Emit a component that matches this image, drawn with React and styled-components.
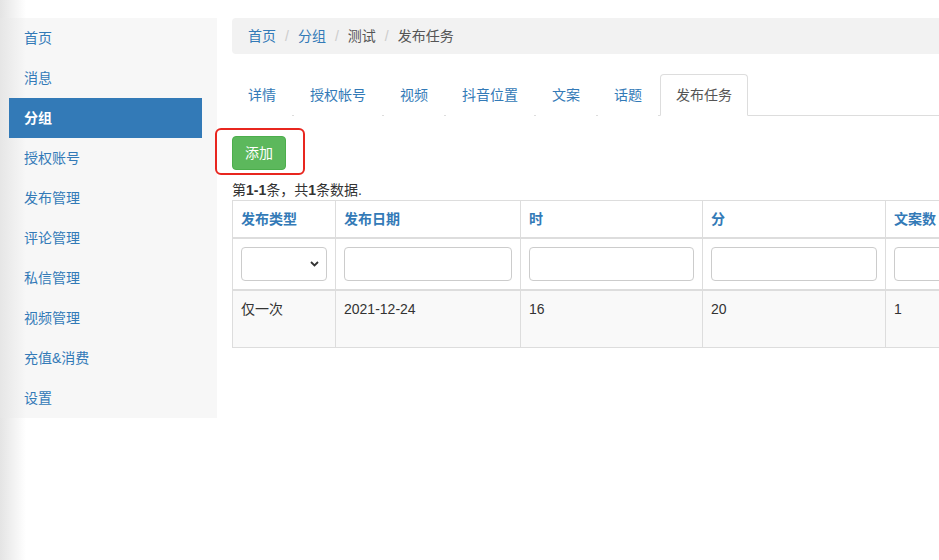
import React from 'react';
import styled, { createGlobalStyle } from 'styled-components';

const GlobalStyle = createGlobalStyle`
  html, body {
    margin: 0;
    padding: 0;
    overflow: hidden;
  }
  body {
    width: 939px;
    height: 560px;
    background: linear-gradient(to right, #e4e4e4 0, #ffffff 26px);
    font-family: "Liberation Sans", "Noto Sans CJK SC", sans-serif;
    font-size: 14px;
    line-height: 20px;
    color: #333;
  }
`;

const Page = styled.div`
  display: flex;
  align-items: flex-start;
  gap: 15px;
  padding-top: 18px;
`;

const Sidebar = styled.ul`
  flex: 0 0 auto;
  width: 193px;
  margin: 0;
  padding: 0 15px 0 9px;
  list-style: none;
  background: linear-gradient(to right, #e6e6e6 0, #f7f7f7 26px);
`;

const SideItem = styled.li`
  height: 40px;
  display: flex;
  align-items: center;
  padding-left: 15px;
  color: ${({ $active }) => ($active ? '#fff' : '#337ab7')};
  background: ${({ $active }) => ($active ? '#337ab7' : 'transparent')};
  font-weight: ${({ $active }) => ($active ? 'bold' : 'normal')};
`;

const Main = styled.div`
  flex: 0 0 auto;
  width: 760px;
`;

const Breadcrumb = styled.ol`
  display: flex;
  margin: 0 0 20px;
  padding: 8px 15px 8px 16px;
  list-style: none;
  background: #f2f2f2;
  border-radius: 4px;
`;

const Crumb = styled.li`
  color: ${({ $link }) => ($link ? '#337ab7' : '#555')};

  &:not(:first-child)::before {
    content: '/';
    padding: 0 9px;
    color: #ccc;
  }
`;

const Tabs = styled.ul`
  display: flex;
  margin: 0;
  padding: 0;
  list-style: none;
  border-bottom: 1px solid #ddd;
`;

const Tab = styled.li`
  margin: 0 2px -1px 0;
  padding: 10px 15px;
  border: 1px solid ${({ $active }) => ($active ? '#ddd' : 'transparent')};
  border-bottom-color: ${({ $active }) => ($active ? '#fff' : 'transparent')};
  border-radius: 4px 4px 0 0;
  background: #fff;
  color: ${({ $active }) => ($active ? '#555' : '#337ab7')};
`;

const Toolbar = styled.div`
  padding-top: 20px;
`;

const Marked = styled.div`
  position: relative;
  display: inline-block;
`;

const Annotation = styled.span`
  position: absolute;
  left: -17px;
  top: -8px;
  right: -19px;
  bottom: -5px;
  border: 2px solid #e8261f;
  border-radius: 6px;
  pointer-events: none;
`;

const AddButton = styled.button`
  display: block;
  padding: 6px 12px;
  border: 1px solid #4cae4c;
  border-radius: 4px;
  background: #5cb85c;
  color: #fff;
  font: inherit;
`;

const Summary = styled.div`
  margin-top: 10px;
  color: #333;

  b {
    font-weight: bold;
  }
`;

const Table = styled.table`
  width: 100%;
  table-layout: fixed;
  border-collapse: collapse;
`;

const HeadCell = styled.th`
  padding: 8px;
  border: 1px solid #ddd;
  border-bottom-width: 2px;
  text-align: left;
  color: #337ab7;
  font-weight: bold;
  white-space: nowrap;
  overflow: hidden;
`;

const FilterCell = styled.td`
  padding: 8px;
  border: 1px solid #ddd;
  border-bottom-width: 2px;
`;

const DataCell = styled.td`
  height: 40px;
  padding: 8px;
  border: 1px solid #ddd;
  vertical-align: top;
  background: #f9f9f9;
  white-space: nowrap;
`;

const Input = styled.input`
  display: block;
  box-sizing: border-box;
  width: 100%;
  height: 34px;
  padding: 6px 12px;
  border: 1px solid #ccc;
  border-radius: 4px;
  background: #fff;
  font: inherit;
`;

const SelectWrap = styled.div`
  position: relative;
`;

const Select = styled.select`
  display: block;
  box-sizing: border-box;
  width: 100%;
  height: 34px;
  border: 1px solid #ccc;
  border-radius: 4px;
  background: #fff;
  appearance: none;
  font: inherit;
`;

const Chevron = styled.svg`
  position: absolute;
  right: 8px;
  top: 14px;
  pointer-events: none;
`;

const columns = [
  { title: '发布类型', width: 103 },
  { title: '发布日期', width: 185 },
  { title: '时', width: 182 },
  { title: '分', width: 183 },
  { title: '文案数', width: 107 },
];

const row = ['仅一次', '2021-12-24', '16', '20', '1'];

const menu = ['首页', '消息', '分组', '授权账号', '发布管理', '评论管理', '私信管理', '视频管理', '充值&消费', '设置'];
const tabs = ['详情', '授权帐号', '视频', '抖音位置', '文案', '话题', '发布任务'];

export default function App() {
  return (
    <>
      <GlobalStyle />
      <Page>
        <Sidebar>
          {menu.map((m) => (
            <SideItem key={m} $active={m === '分组'}>{m}</SideItem>
          ))}
        </Sidebar>
        <Main>
          <Breadcrumb>
            <Crumb $link>首页</Crumb>
            <Crumb $link>分组</Crumb>
            <Crumb>测试</Crumb>
            <Crumb>发布任务</Crumb>
          </Breadcrumb>
          <Tabs>
            {tabs.map((t) => (
              <Tab key={t} $active={t === '发布任务'}>{t}</Tab>
            ))}
          </Tabs>
          <Toolbar>
            <Marked>
              <AddButton>添加</AddButton>
              <Annotation />
            </Marked>
          </Toolbar>
          <Summary>第<b>1-1</b>条，共<b>1</b>条数据.</Summary>
          <Table>
            <colgroup>
              {columns.map((c) => (
                <col key={c.title} style={{ width: c.width }} />
              ))}
            </colgroup>
            <thead>
              <tr>
                {columns.map((c) => (
                  <HeadCell key={c.title}>{c.title}</HeadCell>
                ))}
              </tr>
              <tr>
                <FilterCell>
                  <SelectWrap>
                    <Select defaultValue="">
                      <option value=""></option>
                      <option value="once">仅一次</option>
                    </Select>
                    <Chevron width="9" height="6" viewBox="0 0 9 6">
                      <path d="M1 1l3.5 3.5L8 1" fill="none" stroke="#333" strokeWidth="1.8" />
                    </Chevron>
                  </SelectWrap>
                </FilterCell>
                {columns.slice(1).map((c) => (
                  <FilterCell key={c.title}>
                    <Input type="text" />
                  </FilterCell>
                ))}
              </tr>
            </thead>
            <tbody>
              <tr>
                {row.map((v, i) => (
                  <DataCell key={i}>{v}</DataCell>
                ))}
              </tr>
            </tbody>
          </Table>
        </Main>
      </Page>
    </>
  );
}
